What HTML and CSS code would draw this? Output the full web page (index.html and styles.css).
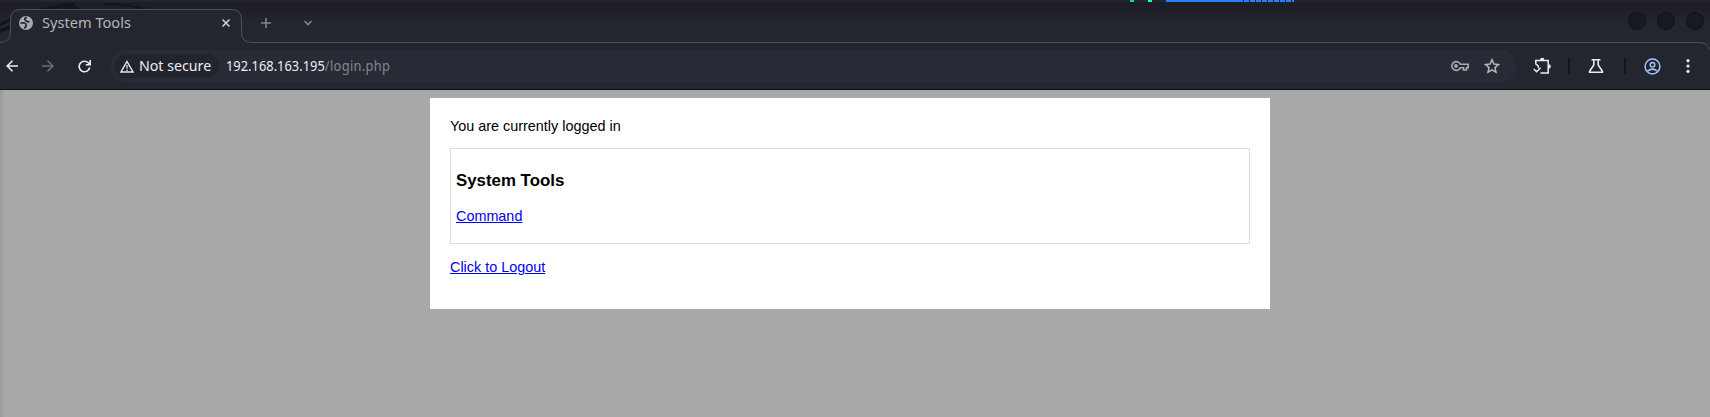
FILE: index.html
```html
<!DOCTYPE html>
<html lang="en">
<head>
<meta charset="utf-8">
<title>System Tools</title>
<link rel="stylesheet" href="styles.css">
</head>
<body>
<header class="browser">
  <div class="desktop-strip"><i class="dash"></i><i class="dash tall"></i><i class="bar"></i></div>
  <svg class="wallpaper" width="170" height="40" viewBox="0 0 170 40"><path d="M0 25Q25 10 75 4M0 31Q30 18 72 7" fill="none" stroke="#14151b" stroke-width="3"/><path d="M66 3l11 8M70 3l11 8M105 4Q125 4 145 9" fill="none" stroke="#14151b" stroke-width="2"/></svg>
  <div class="tabs">
    <svg class="outline" width="1710" height="44" viewBox="0 0 1710 44"><path d="M0 35.500Q10.500 35 10.500 25V12.500Q10.500 2.500 20.500 2.500H231.500Q241.500 2.500 241.500 12.500V25.500Q241.500 35.500 252 35.500H1699Q1708 35.500 1709.500 43H0Z" fill="#23252f"/><path d="M0 35.500Q10.500 35 10.500 25V12.500Q10.500 2.500 20.500 2.500H231.500Q241.500 2.500 241.500 12.500V25.500Q241.500 35.500 252 35.500H1699Q1708 35.500 1709.500 43" fill="none" stroke="#505158"/></svg>
    <div class="tab">
      <svg class="globe" width="14" height="14" viewBox="0 0 14 14"><circle cx="7" cy="7" r="7" fill="#a9abb2"/><path d="M7.800 1.400C6 1.800 5.200 3 6.300 4.200S8.500 6 10.500 5.800M1.400 7.200C4.500 6.400 7 7 7.200 9S5.500 11 5.600 12.600" fill="none" stroke="#23252f" stroke-width="1.700"/></svg>
      <span class="tab-title">System Tools</span>
      <svg width="10" height="10" viewBox="0 0 10 10"><path d="M1.500 1.500l7 7M8.500 1.500l-7 7" stroke="#d0d0d0" stroke-width="1.600"/></svg>
    </div>
    <svg class="plus" width="12" height="12" viewBox="0 0 12 12"><path d="M6 1v10M1 6h10" stroke="#85868b" stroke-width="1.500"/></svg>
    <svg class="chevron" width="10" height="8" viewBox="0 0 10 8"><path d="M1.500 2L5 5.500 8.500 2" fill="none" stroke="#85868b" stroke-width="1.600"/></svg>
    <div class="window-buttons"><i></i><i></i><i></i></div>
  </div>
  <div class="toolbar">
    <svg class="back" width="12" height="12" viewBox="0 0 12 12"><path d="M12 6H1.500M6.500 .8L1.200 6l5.300 5.200" fill="none" stroke="#ededed" stroke-width="1.600"/></svg>
    <svg class="forward" width="12" height="12" viewBox="0 0 12 12"><path d="M0 6h10.500M5.500 .8L10.800 6l-5.300 5.200" fill="none" stroke="#6d6e73" stroke-width="1.600"/></svg>
    <svg class="reload" width="13" height="13" viewBox="0 0 13 13"><path d="M11.700 7.500A5.300 5.300 0 1 1 10.300 2.800L12 4.500M12.200 0v4.700H7.800" fill="none" stroke="#ededed" stroke-width="1.600"/></svg>
    <div class="omnibox">
      <div class="chip">
        <svg width="14" height="13" viewBox="0 0 14 13"><path d="M7 1.500L13 12H1Z" fill="none" stroke="#e6e6e6" stroke-width="1.500"/><path d="M7 5v3.500M7 9.500V11" stroke="#bdbdc0" stroke-width="1.600"/></svg>
        <span class="chip-text">Not secure</span>
      </div>
      <span class="url"><span class="host">192.168.163.195</span>/login.php</span>
      <svg class="key" width="18" height="12" viewBox="0 0 18 12"><path d="M9.300 4.300A4.400 4.400 0 1 0 9.300 7.700H12.500V10H15.500V7.700H17.200V4.300Z" fill="none" stroke="#a9a9ad" stroke-width="1.600"/><circle cx="5" cy="6" r="1.900" fill="#a9a9ad"/></svg>
      <svg class="star" width="16" height="16" viewBox="0 0 16 16"><path d="M8 1.800l1.900 4.300 4.600.4-3.500 3.100 1 4.600L8 11.800l-4 2.400 1-4.600-3.500-3.100 4.600-.4Z" fill="none" stroke="#b8b8ba" stroke-width="1.500"/></svg>
    </div>
    <svg class="extension" width="18" height="18" viewBox="0 0 18 18"><path d="M2.800 7.500V3.500H15.200V16H7.500" fill="none" stroke="#ededed" stroke-width="1.500"/><path d="M7 3a2.200 2.200 0 0 1 4.400 0ZM15.600 7.300a2.200 2.200 0 0 1 0 4.400Z" fill="#ededed"/><path d="M2.800 7.500Q6 8 5.200 11M.8 12l2.800 2.800 4-4" fill="none" stroke="#ededed" stroke-width="1.500"/></svg>
    <i class="divider d1"></i>
    <svg class="flask" width="16" height="16" viewBox="0 0 16 16"><path d="M3.500 1.800h9M5.800 2v5L1.600 13.300V14.300H14.400V13.300L10.200 7V2" fill="none" stroke="#ededed" stroke-width="1.600"/></svg>
    <i class="divider d2"></i>
    <svg class="profile" width="17" height="17" viewBox="0 0 17 17"><g fill="none" stroke="#a5c3fa" stroke-width="1.500"><circle cx="8.500" cy="8.500" r="7.400"/><circle cx="8.500" cy="6.700" r="2.300"/><path d="M3.500 13.300Q8.500 9 13.500 13.300"/></g></svg>
    <svg class="menu" width="4" height="14" viewBox="0 0 4 14"><g fill="#ededed"><circle cx="2" cy="1.700" r="1.600"/><circle cx="2" cy="7" r="1.600"/><circle cx="2" cy="12.300" r="1.600"/></g></svg>
  </div>
</header>
<main class="page">
  <div class="content">
    <p class="status">You are currently logged in</p>
    <section class="tools">
      <h3 class="tools-title">System Tools</h3>
      <a class="link" href="#">Command</a>
    </section>
    <a class="link logout" href="#">Click to Logout</a>
  </div>
</main>
</body>
</html>
```
FILE: styles.css
```css
body { margin: 0; height: 417px; overflow: hidden; display: flex; flex-direction: column; background: #a9a9a9; font-family: "Liberation Sans", Arial, sans-serif; }
svg, i { display: block; flex: none; }
.browser { position: relative; box-sizing: border-box; height: 90px; border-bottom: 1px solid #0b0c14; background: #23252f; font-family: "Noto Sans", sans-serif; flex: none; }
.desktop-strip { height: 2px; display: flex; background: #23252f; padding-left: 1130px; }
.dash { width: 4px; height: 2px; margin-right: 14px; background: #00d9b8; }
.dash.tall { background: #00ffdc; }
.bar { width: 128px; height: 2px; background: linear-gradient(90deg, #277fff 74px, transparent 0), repeating-linear-gradient(90deg, #277fff 0 5px, #23252f 5px 6px); }
.wallpaper { position: absolute; left: 0; top: 0; z-index: 1; clip-path: polygon(0 3px, 170px 3px, 170px 9px, 15px 9px, 10px 15px, 10px 38px, 0 38px); }
.tabs { height: 41px; display: flex; position: relative; align-items: center; box-sizing: border-box; padding-top: 1px; background: linear-gradient(#1b1c24, #23252f 20px); }
.outline { position: absolute; left: 0; top: 5px; }
.tab { position: relative; width: 212px; margin-left: 19px; display: flex; align-items: center; }
.tab svg:last-child { margin-left: auto; }
.tab-title { margin-left: 9px; padding-bottom: 1px; font-size: 14.6px; line-height: 19px; color: #b4b5b8; white-space: nowrap; }
.plus { margin-left: 29px; }
.chevron { margin-left: 31px; }
.window-buttons { display: flex; gap: 11px; margin-left: auto; margin-right: 6px; padding-bottom: 4px; }
.window-buttons i { width: 16px; height: 16px; border: 1px solid #111216; border-radius: 50%; background: #191a1f; }
.toolbar { height: 46px; display: flex; align-items: center; padding-left: 6px; }
.forward { margin-left: 24px; }
.reload { margin-left: 24px; }
.omnibox { width: 1406px; height: 34px; margin-left: 19px; border-radius: 17px; background: #282a36; display: flex; align-items: center; box-sizing: border-box; padding: 0 16px 0 5px; }
.chip { width: 104px; height: 24px; border-radius: 12px; background: #22242d; display: flex; align-items: center; padding-left: 5px; box-sizing: border-box; }
.chip-text { margin-left: 5px; padding-bottom: 2px; font-size: 14.2px; color: #ededed; white-space: nowrap; }
.url { margin-left: 7px; padding-bottom: 2px; font-size: 14px; letter-spacing: .35px; color: #85868b; white-space: nowrap; transform: scaleX(.92); transform-origin: 0 50%; }
.host { color: #ededed; letter-spacing: 0; }
.key { margin-left: auto; }
.star { margin-left: 15px; }
.extension { margin-left: 17px; }
.divider { width: 2px; height: 16px; background: #14151b; }
.d1 { margin-left: 17px; }
.flask { margin-left: 18px; }
.d2 { margin-left: 20px; }
.profile { margin-left: 18px; }
.menu { margin-left: 25px; }
.page { flex: 1; padding: 8px 10px 0 0; background: linear-gradient(90deg, #999 0, #a9a9a9 5px); }
.content { width: 840px; height: 211px; margin: 0 auto; box-sizing: border-box; padding: 20px; background: #fff; color: #000; font-size: 14.4px; line-height: 16px; }
.status { margin: 0 0 14px; }
.tools { height: 96px; box-sizing: border-box; border: 1px solid #dcdcdc; padding: 23px 5px 0; }
.tools-title { margin: 0 0 18px; font-size: 16.85px; line-height: 18px; }
.link { color: #00e; text-decoration: underline; display: block; width: fit-content; }
.logout { margin-top: 15px; }
```
